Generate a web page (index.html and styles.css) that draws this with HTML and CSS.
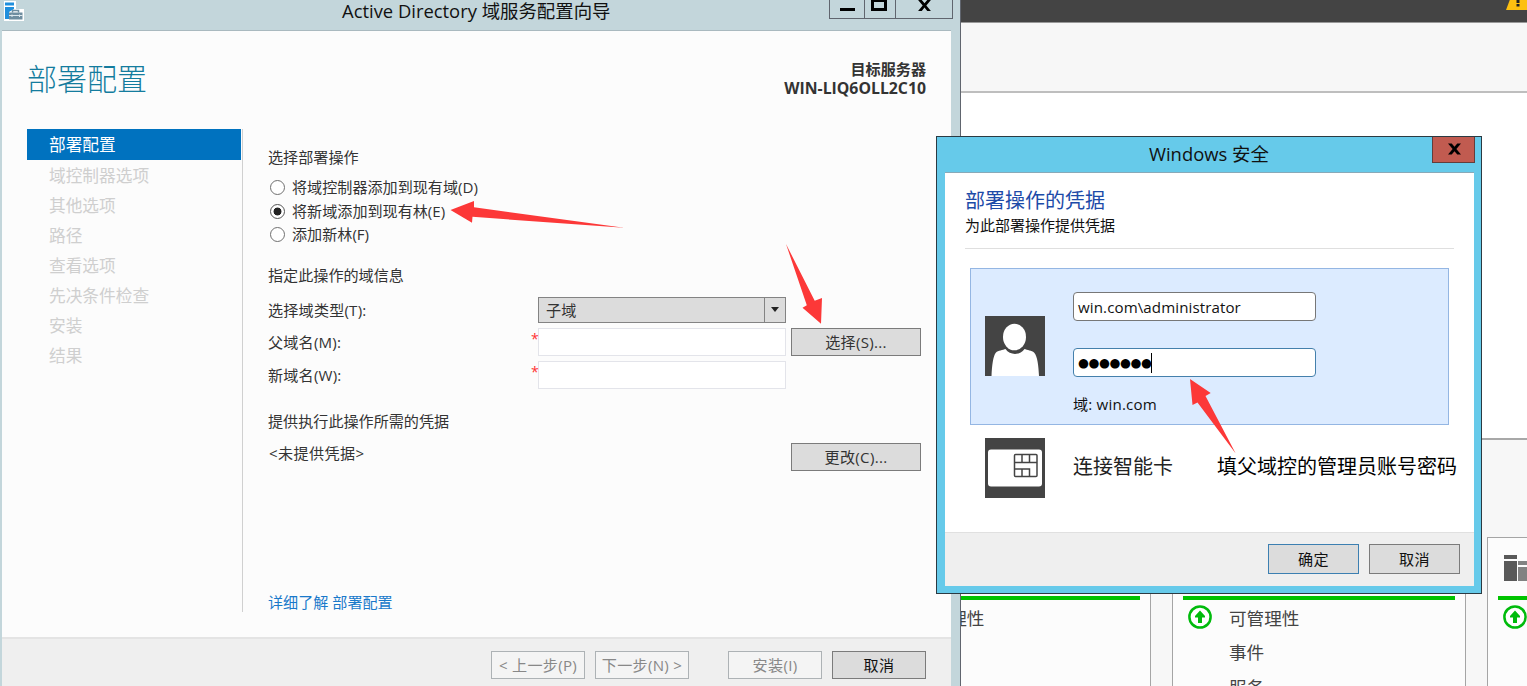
FILE: index.html
```html
<!DOCTYPE html>
<html lang="zh-CN">
<head>
  <meta charset="UTF-8" />
  <meta name="viewport" content="width=device-width, initial-scale=1.0" />
  <title>Active Directory 域服务配置向导</title>
  <link rel="stylesheet" href="styles.css">
</head>
<body>
  <div class="desktop">

    <!-- Server Manager -->
    <div class="manager">
      <div class="manager-bar">
        <svg class="warning" width="26" height="22" viewBox="0 0 26 22">
          <path d="M0 10 L6 -6 H19 L26 10 Z" fill="#fdc010" />
          <path d="M10.500 -2h3v5h-3zM10.500 4h3v2.500h-3z" fill="#222" />
        </svg>
      </div>
      <div class="manager-band"></div>
      <div class="manager-blank"></div>
      <div class="tiles">
        <div class="tile">
          <div class="tile-head"></div>
          <div class="tile-row"><span class="tile-icon"></span>可管理性</div>
        </div>
        <div class="tile">
          <div class="tile-head"></div>
          <div class="tile-row">
            <svg class="tile-icon" width="24" height="24" viewBox="0 0 24 24">
              <circle cx="12" cy="12" r="10.600" fill="#fff" stroke="#00bb0c" stroke-width="2.500" />
              <path d="M12 5.500 L17 11 V12.500 H14 V18 H10 V12.500 H7 V11 Z" fill="#00bb0c" />
            </svg>可管理性
          </div>
          <div class="tile-row"><span class="tile-icon"></span>事件</div>
          <div class="tile-row"><span class="tile-icon"></span>服务</div>
        </div>
        <div class="tile">
          <div class="tile-head">
            <svg class="servers" width="34" height="26" viewBox="0 0 34 26">
              <path d="M0 0h13v4H0zM0 6h13v20H0z" fill="#595959" />
              <path d="M14 6h13v4H14zM14 12h13v14H14z" fill="#828282" />
            </svg>
          </div>
          <div class="tile-row">
            <svg class="tile-icon" width="24" height="24" viewBox="0 0 24 24">
              <circle cx="12" cy="12" r="10.600" fill="#fff" stroke="#00bb0c" stroke-width="2.500" />
              <path d="M12 5.500 L17 11 V12.500 H14 V18 H10 V12.500 H7 V11 Z" fill="#00bb0c" />
            </svg>
          </div>
        </div>
      </div>
    </div>

    <!-- Configuration wizard -->
    <div class="wizard">
      <div class="wizard-titlebar">
        <svg class="wizard-icon" width="22" height="22" viewBox="0 0 22 22">
          <path d="M0 0h12v8h8v12H0z" fill="#fff" />
          <path d="M1 1.500h9v3H1zM1 6h9v2L5 11v7H1z" fill="#1f8fdd" />
          <path d="M8.500 11.500V9.500h6V11.500" fill="none" stroke="#6f8ea0" stroke-width="1.500" />
          <path d="M5 11.500h13.500v7H5z" fill="#6f8ea0" />
          <path d="M5 14.500h13.500M8 13.500v2.500M15.500 13.500v2.500" stroke="#dce8ee" />
        </svg>
        <span class="wizard-title">Active Directory 域服务配置向导</span>
        <div class="caption-buttons">
          <span class="caption-btn min"><i></i></span>
          <span class="caption-btn max"><i></i></span>
          <span class="caption-btn close">
            <svg width="13" height="11" viewBox="0 0 14 12"><path d="M0 0h4l3 3.500 3-3.500h4L9 6l5 6h-4L7 8.300 4 12H0l5-6z" /></svg>
          </span>
        </div>
      </div>

      <div class="wizard-body">
        <div class="wizard-header">
          <h1>部署配置</h1>
          <div class="target">
            <div>目标服务器</div>
            <div class="target-name">WIN-LIQ6OLL2C10</div>
          </div>
        </div>

        <div class="wizard-content">
          <ul class="steps">
            <li class="active">部署配置</li>
            <li>域控制器选项</li>
            <li>其他选项</li>
            <li>路径</li>
            <li>查看选项</li>
            <li>先决条件检查</li>
            <li>安装</li>
            <li>结果</li>
          </ul>

          <div class="page">
            <div class="section-label">选择部署操作</div>
            <div class="radios">
              <label class="radio"><i></i><span>将域控制器添加到现有域(D)</span></label>
              <label class="radio checked"><i></i><span>将新域添加到现有林(E)</span></label>
              <label class="radio"><i></i><span>添加新林(F)</span></label>
            </div>

            <div class="section-label domain-label">指定此操作的域信息</div>
            <div class="form-grid">
              <span class="label">选择域类型(T):</span>
              <div class="select"><span>子域</span><b><i></i></b></div>
              <span></span>
              <span class="label">父域名(M):</span>
              <div class="field"><em>*</em></div>
              <button class="btn">选择(S)...</button>
              <span class="label">新域名(W):</span>
              <div class="field"><em>*</em></div>
              <span></span>
            </div>

            <div class="section-label cred-label">提供执行此操作所需的凭据</div>
            <div class="cred-row">
              <span>&lt;未提供凭据&gt;</span>
              <button class="btn">更改(C)...</button>
            </div>

            <a class="more">详细了解 部署配置</a>
          </div>
        </div>

        <div class="wizard-footer">
          <button class="btn disabled">&lt; 上一步(P)</button>
          <button class="btn disabled">下一步(N) &gt;</button>
          <button class="btn disabled install">安装(I)</button>
          <button class="btn cancel">取消</button>
        </div>
      </div>
    </div>

    <!-- Windows Security dialog -->
    <div class="dialog">
      <div class="dialog-titlebar">
        <span class="dialog-title">Windows 安全</span>
        <span class="dialog-close">
          <svg width="13" height="12" viewBox="0 0 14 12"><path d="M0 0h4l3 3.500 3-3.500h4L9 6l5 6h-4L7 8.300 4 12H0l5-6z" /></svg>
        </span>
      </div>
      <div class="dialog-body">
        <div class="dialog-main">
          <h2>部署操作的凭据</h2>
          <p>为此部署操作提供凭据</p>
          <div class="credential">
            <svg class="avatar" width="60" height="60" viewBox="0 0 60 60">
              <rect width="60" height="60" fill="#444" />
              <path d="M6.500 60 C7 50 8 40 11 36.500 C13 34.500 18 34 20.500 33 C25 39.500 35 39.500 39.500 33 C42 34 47 34.500 49 36.500 C52.500 40 53.500 50 54 60 Z" fill="#fff" />
              <ellipse cx="29.500" cy="21" rx="11.500" ry="13.300" fill="#fff" />
            </svg>
            <div class="credential-fields">
              <div class="input user">win.com\administrator</div>
              <div class="input password">●●●●●●●</div>
              <div class="domain">域: win.com</div>
            </div>
          </div>
          <div class="smartcard">
            <svg width="60" height="60" viewBox="0 0 60 60">
              <rect width="60" height="60" fill="#444" />
              <rect x="3" y="11.500" width="54" height="37" rx="3" fill="#fff" />
              <rect x="29.500" y="16.500" width="22.500" height="22" rx="1" fill="none" stroke="#444" stroke-width="1.500" />
              <path d="M29.500 24.500H52M29.500 31H44.500V38.500M37 16.500V24.500M44.500 16.500V24.500M37 31V38.500" fill="none" stroke="#444" stroke-width="1.500" />
            </svg>
            <span>连接智能卡</span>
          </div>
        </div>
        <div class="dialog-footer">
          <button class="btn ok">确定</button>
          <button class="btn">取消</button>
        </div>
      </div>
    </div>

    <!-- Annotations -->
    <svg class="arrows" width="1527" height="686" viewBox="0 0 1527 686">
      <polygon points="450.500,210 474,201 474,207.300 624,227.800 472.500,216.800 472,222.700" />
      <polygon points="786,244 814.700,300.700 822,298 821,323.700 802.500,307.700 806.800,305.300" />
      <polygon points="1190,379 1210.700,393 1205.500,396 1235.700,453.500 1197.500,402.500 1192.500,405" />
    </svg>
    <div class="note">填父域控的管理员账号密码</div>
  </div>
</body>
</html>
```
FILE: styles.css
```css
* {
  box-sizing: border-box;
}

body {
  margin: 0;
  font-family: "Open Sans", "Noto Sans CJK SC", sans-serif;
  font-size: 15.1px;
  color: #333;
}

h1, h2, p, ul {
  margin: 0;
  padding: 0;
  font-weight: normal;
}

i, em {
  font-style: normal;
}

svg {
  display: block;
  flex: none;
}

.desktop {
  position: relative;
  width: 1527px;
  height: 686px;
  overflow: hidden;
  background: #fff;
  white-space: nowrap;
}

/* Server Manager */
.manager {
  position: absolute;
  left: 840px;
  top: 0;
  width: 687px;
  height: 686px;
  overflow: hidden;
}

.manager-bar {
  display: flex;
  justify-content: flex-end;
  height: 23px;
  background: #444;
  border-bottom: 1px solid #999;
}

.warning {
  margin-right: -5px;
}

.manager-band {
  height: 70px;
  background: #f7f7f7;
  border-bottom: 2px solid #bebebe;
}

.manager-blank {
  height: 345px;
  background: #fff;
}

.tiles {
  display: flex;
  gap: 21px;
  height: 248px;
  padding: 97px 0 0 17px;
  background: #f7f7f7;
  border-top: 2px solid #a8a8a8;
}

.tile {
  flex: none;
  width: 294px;
  height: 160px;
  padding: 0 10px;
  background: #fcfcfc;
  border: 1px solid #a5a5a5;
}

.tile-head {
  height: 62px;
  padding: 17px 6px 0;
  border-bottom: 4px solid #00c300;
}

.tile-row {
  display: flex;
  align-items: center;
  height: 34.6px;
  padding-left: 5px;
  font-size: 17.6px;
  color: #444;
}

.tile-icon {
  width: 24px;
  margin-right: 17px;
}

/* Wizard window */
.wizard {
  position: absolute;
  left: 0;
  top: 0;
  width: 961px;
  height: 686px;
  padding: 0 9px 0 2px;
  background: #c3d6db;
  border-right: 1px solid #60656e;
}

.wizard-titlebar {
  display: flex;
  height: 31px;
  border-bottom: 1px solid #a9b9bf;
}

.wizard-icon {
  margin: 1px 0 0 2px;
}

.wizard-title {
  flex: 1;
  padding-left: 316px;
  font-size: 18.4px;
  line-height: 21px;
  color: #111;
}

.caption-buttons {
  display: flex;
  height: 19px;
  margin-right: -2px;
  border: 1px solid #60656e;
  border-top: 0;
}

.caption-btn {
  display: flex;
  justify-content: center;
  width: 56px;
}

.caption-btn.min {
  width: 34px;
}

.caption-btn.max {
  width: 32px;
  padding-right: 2px;
  border: solid #60656e;
  border-width: 0 1px;
}

.min i {
  width: 15px;
  height: 3px;
  margin-top: 8px;
  background: #000;
}

.max i {
  width: 16px;
  height: 12px;
  margin-top: -1px;
  border: 3px solid #000;
}

.wizard-body {
  display: flex;
  flex-direction: column;
  height: 655px;
  background: #fcfcfc;
}

.wizard-header {
  display: flex;
  justify-content: space-between;
  height: 98px;
  padding: 25px 25px 0;
}

h1 {
  font-size: 30px;
  font-weight: 300;
  line-height: 46px;
  color: #147c9e;
}

.target {
  padding-top: 4px;
  font-weight: bold;
  line-height: 19px;
  text-align: right;
}

.target-name {
  font-size: 15.8px;
}

.wizard-content {
  display: flex;
  flex: 1;
  padding-left: 25px;
}

.steps {
  width: 216px;
  height: 483px;
  padding-right: 1px;
  list-style: none;
  border-right: 1px solid #d0d0d0;
}

.steps li {
  height: 30px;
  padding-left: 22px;
  font-size: 16.7px;
  line-height: 32px;
  color: #cfcfcf;
}

.steps li.active {
  height: 31px;
  background: #0072bf;
  color: #fff;
}

.page {
  width: 653px;
  padding: 17px 0 0 25px;
}

.section-label {
  line-height: 22px;
}

.radios {
  margin-top: 8px;
}

.radio {
  display: flex;
  align-items: center;
  height: 23.5px;
}

.radio i {
  width: 15px;
  height: 15px;
  margin: 0 7px 0 2px;
  background: #fff;
  border: 1px solid #707070;
  border-radius: 50%;
}

.radio span {
  margin-top: -3px;
}

.radio.checked i {
  border-color: #555;
  background: radial-gradient(circle, #222 3.6px, #fff 4.3px);
}

.domain-label {
  margin-top: 17px;
}

.form-grid {
  display: grid;
  grid-template-columns: 265px 248px 130px;
  grid-template-rows: 26px 28px 28px;
  gap: 5px;
  align-items: center;
  margin-top: 11px;
  letter-spacing: 0.1px;
}

.form-grid .label {
  margin-top: -2px;
  letter-spacing: 0.2px;
}

.select {
  display: flex;
  height: 26px;
  background: #dcdcdc;
  border: 1px solid #838383;
}

.select span {
  flex: 1;
  padding-left: 7px;
  line-height: 25px;
}

.select b {
  display: flex;
  align-items: center;
  justify-content: center;
  width: 21px;
  border-left: 1px solid #838383;
}

.select i {
  border: 4.5px solid transparent;
  border-top: 5px solid #222;
  border-bottom: 0;
}

.field {
  position: relative;
  height: 28px;
  background: #fff;
  border: 1px solid #e3e4ea;
}

.field em {
  position: absolute;
  left: -8px;
  top: 0;
  font-size: 14px;
  line-height: 20px;
  color: #f33;
}

.btn {
  width: 130px;
  height: 28px;
  padding: 0;
  font-family: inherit;
  font-size: 15.1px;
  line-height: 24px;
  letter-spacing: 0.3px;
  color: #333;
  background: #dcdcdc;
  border: 1px solid #7b7b7b;
}

.cred-label {
  margin-top: 21px;
}

.cred-row {
  display: flex;
  align-items: center;
  justify-content: space-between;
  height: 28px;
  margin-top: 11px;
}

.cred-row span {
  margin: -9px 0 0 1px;
  letter-spacing: 0.4px;
}

.cred-row,
.form-grid {
  width: 653px;
}

.more {
  display: block;
  margin-top: 120px;
  line-height: 22px;
  color: #1979ca;
}

.wizard-footer {
  display: flex;
  gap: 10px;
  justify-content: flex-end;
  height: 49px;
  padding: 12px 25px 0 0;
  background: #efefef;
  border-top: 2px solid #e4e4e4;
}

.wizard-footer .btn {
  width: 94px;
}

.btn.disabled {
  color: #888;
  background: #f4f4f4;
  border-color: #adb2b5;
}

.btn.install {
  margin-left: 29px;
}

.btn.cancel {
  color: #111;
}

/* Windows Security dialog */
.dialog {
  position: absolute;
  left: 936px;
  top: 136px;
  width: 546px;
  height: 458px;
  padding: 0 7px 0 8px;
  background: #66caea;
  border: 1px solid #2b3a42;
}

.dialog-titlebar {
  display: flex;
  height: 36px;
  border-bottom: 1px solid #88a9b8;
}

.dialog-title {
  flex: 1;
  padding-left: 204px;
  font-size: 18.4px;
  line-height: 33px;
  color: #111;
}

.dialog-close {
  display: flex;
  justify-content: center;
  width: 43px;
  height: 26px;
  margin-right: -1px;
  padding: 6px 0 0 1px;
  background: #c15b50;
  border: 1px solid #633d3b;
  border-top: 0;
}

.dialog-body {
  height: 413px;
  background: #fff;
}

.dialog-main {
  height: 359px;
  padding: 14px 20px 0;
}

h2 {
  font-size: 20px;
  line-height: 28px;
  color: #1d4ba8;
}

.dialog p {
  height: 34px;
  font-size: 15px;
  line-height: 20px;
  color: #111;
  border-bottom: 1px solid #dfdfdf;
}

.credential {
  display: flex;
  width: 479px;
  height: 157px;
  margin: 19px 0 0 5px;
  background: #dcebff;
  border: 1px solid #94b6e3;
}

.avatar {
  margin: 47px 28px 0 14px;
}

.credential-fields {
  padding-top: 23px;
  color: #111;
}

.input {
  width: 243px;
  height: 29px;
  margin-bottom: 27px;
  padding-left: 4px;
  line-height: 29px;
  letter-spacing: 0.1px;
  background: #fff;
  border: 1px solid #777;
  border-radius: 4px;
}

.password {
  display: flex;
  align-items: center;
  margin-bottom: 16px;
  font-family: "DejaVu Sans", sans-serif;
  font-size: 12.5px;
  line-height: 31px;
  letter-spacing: -0.4px;
  color: #000;
  border-color: #4480ac;
}

/* text caret */
.password::after {
  content: "";
  width: 1px;
  height: 20px;
  margin-left: -1px;
  background: #000;
}

.domain {
  line-height: 22px;
  letter-spacing: 0.2px;
}

.smartcard {
  display: flex;
  align-items: center;
  gap: 28px;
  margin: 13px 0 0 20px;
  font-size: 20px;
  color: #222;
}

.smartcard span {
  margin-top: -5px;
}

.dialog-footer {
  display: flex;
  gap: 10px;
  justify-content: flex-end;
  height: 54px;
  padding: 11px 14px 0 0;
  background: #efefef;
  border-top: 1px solid #e0e0e0;
}

.dialog-footer .btn {
  width: 91px;
  height: 30px;
  color: #111;
}

.btn.ok {
  border-color: #3c7fb1;
}

/* Annotations */
.arrows {
  position: absolute;
  left: 0;
  top: 0;
  fill: #fc3838;
}

.note {
  position: absolute;
  left: 1217px;
  top: 453px;
  font-size: 20px;
  line-height: 28px;
  color: #000;
}
```
